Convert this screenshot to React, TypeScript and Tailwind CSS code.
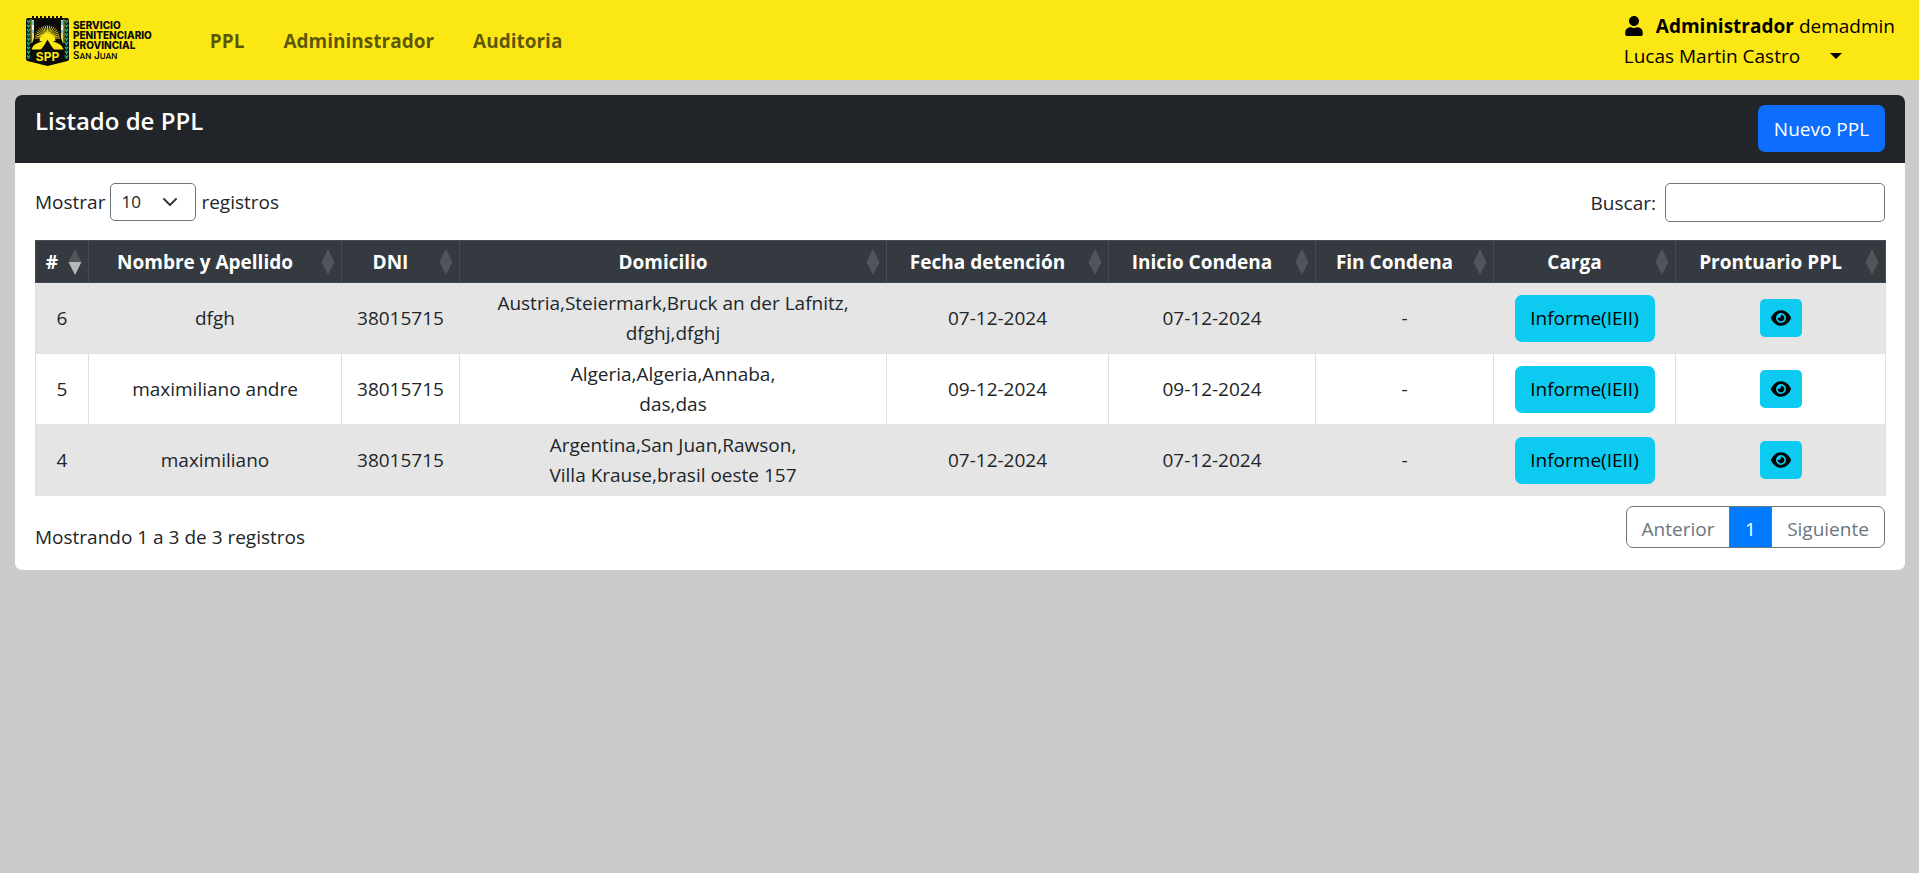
import React from "react";
import { FaEye } from "react-icons/fa6";
import { FaUser } from "react-icons/fa";

type Row = { id: number; name: string; dni: string; address: [string, string]; arrest: string; start: string; end: string };

const rows: Row[] = [
  { id: 6, name: "dfgh", dni: "38015715", address: ["Austria,Steiermark,Bruck an der Lafnitz,", "dfghj,dfghj"], arrest: "07-12-2024", start: "07-12-2024", end: "-" },
  { id: 5, name: "maximiliano andre", dni: "38015715", address: ["Algeria,Algeria,Annaba,", "das,das"], arrest: "09-12-2024", start: "09-12-2024", end: "-" },
  { id: 4, name: "maximiliano", dni: "38015715", address: ["Argentina,San Juan,Rawson,", "Villa Krause,brasil oeste 157"], arrest: "07-12-2024", start: "07-12-2024", end: "-" },
];

const columns = [
  { label: "#", width: "w-[53px]" },
  { label: "Nombre y Apellido", width: "w-[253px]" },
  { label: "DNI", width: "w-[118px]" },
  { label: "Domicilio", width: "w-[427px]" },
  { label: "Fecha detención", width: "w-[222px]" },
  { label: "Inicio Condena", width: "w-[207px]" },
  { label: "Fin Condena", width: "w-[178px]" },
  { label: "Carga", width: "w-[182px]" },
  { label: "Prontuario PPL", width: "w-[210px]" },
];

const rays = Array.from({ length: 19 }, (_, i) => (i * Math.PI) / 18);
const links = [0, 1, 2, 3, 4, 5, 6, 7, 8];

function Shield() {
  return (
    <svg className="h-[50px] w-[45px] shrink-0" viewBox="0 0 45 50" aria-hidden="true">
      <path d="M1 4Q1 2 3 2H7V0H9V2H11V0H13V2H15V0H17V2H19V0H21V2H23V0H25V2H27V0H29V2H31V0H33V2H35V0H37V2H42Q44 2 44 4V43Q44 44.6 42.5 45L22.5 50L2.5 45Q1 44.6 1 43Z" fill="#0b0b09" />
      <path d="M6 3V27M39 3V27" stroke="#fbe714" strokeWidth="0.7" />
      {links.map((i) => (
        <g key={i} fill="none" stroke="#1fa67a" strokeWidth="1.5">
          <path d={`M2 ${4.2 + i * 4.4}L3.5 ${6.4 + i * 4.4}L5 ${4.2 + i * 4.4}M3.5 ${6.4 + i * 4.4}V${7.8 + i * 4.4}`} />
          <path d={`M40 ${4.2 + i * 4.4}L41.5 ${6.4 + i * 4.4}L43 ${4.2 + i * 4.4}M41.5 ${6.4 + i * 4.4}V${7.8 + i * 4.4}`} />
        </g>
      ))}
      <path d="M6.8 4H9V22L6.8 28ZM36 4H38.2V28L36 22Z" fill="#e9dc5c" />
      <path d="M6.8 5H9V9H6.8ZM36 5H38.2V9H36ZM6.8 14H9V17H6.8ZM36 14H38.2V17H36Z" fill="#6cc7d6" />
      <path d="M6.8 9H9V14H6.8ZM36 9H38.2V14H36Z" fill="#f3efd0" />
      <g stroke="#f5df22" strokeWidth="0.9">
        {rays.map((a) => (
          <line key={a} x1={22.5 - 4 * Math.cos(a)} y1={22 - 4 * Math.sin(a)} x2={22.5 - 12.5 * Math.cos(a)} y2={22 - 12.5 * Math.sin(a)} />
        ))}
      </g>
      <path d="M14.5 25A8 8 0 0 1 30.5 25Z" fill="#fbe714" />
      <path d="M6.5 33.5C8 29 11 27.5 14 26.5C17.5 25.5 19.5 23 22.5 20.5C25.5 23 27.5 25.5 31 26.5C34 27.5 37 29 38.5 33.5Z" fill="#fbe714" />
      <path d="M15.5 34C18.5 31 20.5 27 22.5 23.5C24.5 27 26.5 31 29.5 34Z" fill="#0b0b09" />
      <text x="22.5" y="45" textAnchor="middle" fontFamily="Inter, sans-serif" fontSize="12" fontWeight="700" fill="#fbe714">SPP</text>
    </svg>
  );
}

function SortMarks({ active }: { active: boolean }) {
  return (
    <svg className="h-7 w-[14px] shrink-0" viewBox="0 0 14 28" aria-hidden="true">
      <path d="M0.5 14L7 1L13.5 14Z" fill="#50555b" />
      <path d="M0.5 14L7 27L13.5 14Z" fill={active ? "#b5b7b9" : "#50555b"} />
    </svg>
  );
}

function Header() {
  return (
    <header className="flex h-20 items-center bg-[#fbe714] pt-px pr-6 pl-[25px]">
      <a href="#inicio" className="flex items-center gap-[3px] text-[#0b0b09]">
        <Shield />
        <span className="flex flex-col font-[Inter,sans-serif] text-[10px] leading-[10px] font-extrabold">
          <span>SERVICIO</span>
          <span>PENITENCIARIO</span>
          <span>PROVINCIAL</span>
          <span className="font-semibold">
            S<span className="text-[8px]">AN</span> J<span className="text-[8px]">UAN</span>
          </span>
        </span>
      </a>
      <nav className="ml-[58px] flex gap-[39px] font-bold text-black/65">
        <a href="#ppl">PPL</a>
        <a href="#administrador">Admininstrador</a>
        <a href="#auditoria">Auditoria</a>
      </nav>
      <button type="button" className="ml-auto text-left text-black">
        <span className="flex items-center">
          <FaUser className="mr-3 size-5" />
          <strong className="mr-[5px] font-bold">Administrador</strong>
          demadmin
        </span>
        <span className="flex items-center gap-[30px]">
          Lucas Martin Castro
          <svg className="h-[6px] w-3" viewBox="0 0 12 6" aria-hidden="true">
            <path d="M0 0H12L6 6Z" />
          </svg>
        </span>
      </button>
    </header>
  );
}

function PplTable() {
  return (
    <table className="mt-[18px] w-full table-fixed border-collapse border border-[#dee2e6] text-center">
      <thead className="bg-[#343a40] text-white">
        <tr className="h-[42px]">
          {columns.map((c, i) => (
            <th key={c.label} scope="col" className={`${c.width} border border-[#454d55] p-0 font-bold`}>
              <div className="flex items-center pr-[6px]">
                <span className="grow whitespace-nowrap">{c.label}</span>
                <SortMarks active={i === 0} />
              </div>
            </th>
          ))}
        </tr>
      </thead>
      <tbody>
        {rows.map((r) => (
          <tr key={r.id} className="h-[71px] odd:bg-[#e5e5e5] [&>td]:border [&>td]:border-[#dee2e6] [&>td]:p-0">
            <td>{r.id}</td>
            <td>{r.name}</td>
            <td>{r.dni}</td>
            <td>
              {r.address[0]}
              <br />
              {r.address[1]}
            </td>
            <td>{r.arrest}</td>
            <td>{r.start}</td>
            <td>{r.end}</td>
            <td>
              <button type="button" className="h-[47px] w-[140px] rounded-[7px] bg-[#0dcaf0] align-middle text-black">
                Informe(IEII)
              </button>
            </td>
            <td>
              <button type="button" aria-label="Ver prontuario" className="inline-flex h-[38px] w-[42px] items-center justify-center rounded-[5px] bg-[#0dcaf0] align-middle text-black">
                <FaEye className="size-5" />
              </button>
            </td>
          </tr>
        ))}
      </tbody>
    </table>
  );
}

export default function App() {
  return (
    <div className="min-h-screen bg-[#cbcbcb] font-['Open_Sans',sans-serif] text-[19px] leading-[30px] text-[#212529]">
      <Header />
      <main className="py-[15px] pr-[14px] pl-[15px]">
        <section className="overflow-hidden rounded-[7px] bg-white">
          <div className="flex h-[68px] items-start justify-between bg-[#212529] px-5 py-[10px] text-white">
            <h1 className="text-[24px] leading-8 font-semibold">Listado de PPL</h1>
            <button type="button" className="h-[47px] w-[127px] rounded-[7px] bg-[#0d6efd]">Nuevo PPL</button>
          </div>
          <div className="px-5 pt-5 pb-[18px]">
            <div className="flex items-start justify-between">
              <label className="flex items-center gap-[5px]">
                Mostrar
                <span className="relative flex items-center">
                  <select className="h-[38px] w-[86px] appearance-none rounded-[5px] border border-[#6c757d] bg-white pl-[10px] text-[17px]">
                    <option>10</option>
                  </select>
                  <svg className="pointer-events-none absolute right-[18px] size-4" viewBox="0 0 16 16" fill="none" aria-hidden="true">
                    <path d="M2 5L8 11L14 5" stroke="#343a40" strokeWidth="2" strokeLinecap="round" strokeLinejoin="round" />
                  </svg>
                </span>
                registros
              </label>
              <label className="flex items-center gap-[9px]">
                Buscar:
                <input type="search" className="h-[39px] w-[220px] rounded-[5px] border border-[#6c757d] px-[10px]" />
              </label>
            </div>
            <PplTable />
            <div className="flex items-start justify-between pt-[10px]">
              <p className="pt-4">Mostrando 1 a 3 de 3 registros</p>
              <nav aria-label="Paginación" className="flex h-[42px] overflow-hidden rounded-[7px] border border-[#6c757d] text-[#6c757d]">
                <button type="button" className="w-[102px] pt-1">Anterior</button>
                <button type="button" className="w-[43px] border-x border-[#6c757d] bg-[#007bff] pt-1 text-white">1</button>
                <button type="button" className="w-[112px] pt-1">Siguiente</button>
              </nav>
            </div>
          </div>
        </section>
      </main>
    </div>
  );
}
